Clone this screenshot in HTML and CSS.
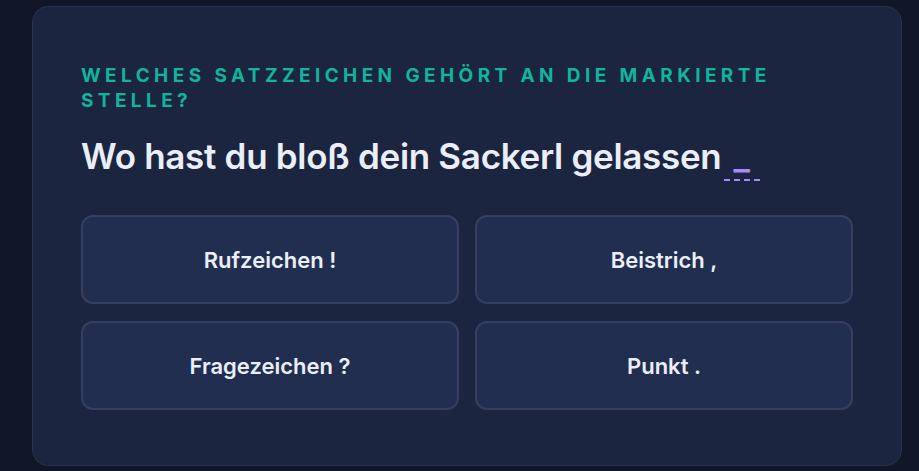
FILE: index.html
```html
<!DOCTYPE html>
<html lang="de">
<head>
    <meta charset="UTF-8">
    <meta name="viewport" content="width=device-width, initial-scale=1.0">
    <title>Satzzeichen Quiz</title>
    <link rel="stylesheet" href="styles.css">
</head>
<body>
    <div class="quiz-card">
        <div class="quiz-label">Welches Satzzeichen gehört an die markierte Stelle?</div>
        <h1 class="quiz-question">Wo hast du bloß dein Sackerl gelassen<span class="blank">_</span></h1>

        <div class="options">
            <button type="button" class="option">Rufzeichen !</button>
            <button type="button" class="option">Beistrich ,</button>
            <button type="button" class="option">Fragezeichen ?</button>
            <button type="button" class="option">Punkt .</button>
        </div>
    </div>
</body>
</html>
```

FILE: styles.css
```css
body {
    margin: 0;
    padding: 6px 17px 6px 32px;
    background-color: #111729;
    font-family: Inter, "Noto Sans", sans-serif;
    color: #e9eef8;
}
.quiz-card {
    background-color: #1b2540;
    border: 1px solid #273150;
    border-radius: 16px;
    padding: 56px 48px 55px 48px;
}
.quiz-label {
    color: #11b49c;
    font-size: 19px;
    font-weight: 700;
    letter-spacing: 4.4px;
    line-height: 25px;
    text-transform: uppercase;
}
.quiz-question {
    margin: 21px 0 37px 0;
    font-size: 35px;
    font-weight: 600;
    line-height: 44px;
    letter-spacing: -0.3px;
    color: #e9eef8;
}
.blank {
    margin-left: 2px;
    padding: 0 10px 2px 10px;
    color: #a78bfa;
    border-bottom: 2px dashed #a78bfa;
}
.options {
    display: grid;
    grid-template-columns: 1fr 1fr;
    gap: 17px 16px;
}
.option {
    height: 89px;
    background-color: #222e50;
    border: 2px solid #363f62;
    border-radius: 12px;
    color: #e9eef8;
    font-family: Inter, "Noto Sans", sans-serif;
    font-size: 22px;
    font-weight: 600;
    cursor: pointer;
}
.option:hover {
    background-color: #28355b;
}
```
